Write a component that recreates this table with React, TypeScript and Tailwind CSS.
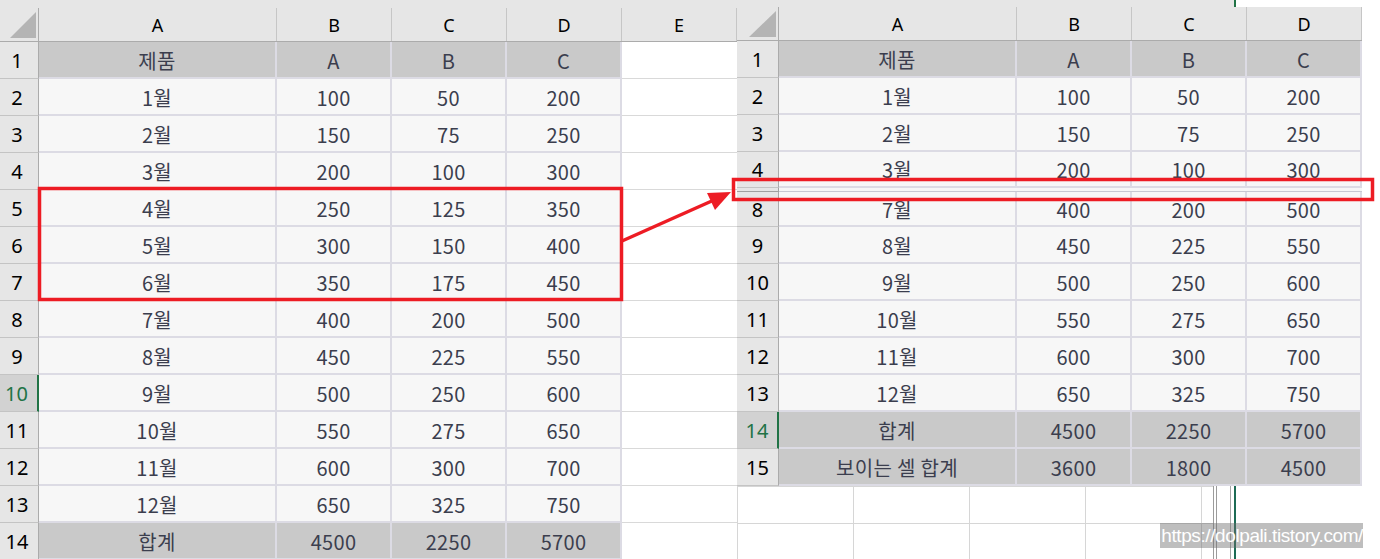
import React from 'react';

type RowData = {
  n: number;
  cells: string[];
  head?: boolean;
  sel?: boolean;
};

const months: RowData[] = Array.from({ length: 12 }, (_, i) => ({
  n: i + 2,
  cells: [`${i + 1}월`, String(100 + 50 * i), String(50 + 25 * i), String(200 + 50 * i)],
}));

const leftRows: RowData[] = [
  { n: 1, cells: ['제품', 'A', 'B', 'C'], head: true },
  ...months.map((r) => (r.n === 10 ? { ...r, sel: true } : r)),
  { n: 14, cells: ['합계', '4500', '2250', '5700'], head: true },
];

// right sheet hides rows 5-7
const rightTop = [leftRows[0], leftRows[1], leftRows[2]];
const rightRow4 = leftRows[3];
const rightBottom: RowData[] = [
  ...months.slice(6),
  { n: 14, cells: ['합계', '4500', '2250', '5700'], head: true, sel: true },
  { n: 15, cells: ['보이는 셀 합계', '3600', '1800', '4500'], head: true },
];

const cellFont = { fontFamily: '"Noto Sans CJK KR", "Noto Sans", sans-serif' };
const headFont = { fontFamily: '"Noto Sans", "Open Sans", sans-serif' };

function Corner({ right = false }: { right?: boolean }) {
  return right ? (
    <div className="w-[42px] h-full shrink-0 border-r border-[#ababab]">
      <svg width="42" height="33" viewBox="0 0 42 33">
        <polygon points="12,30 39,30 39,4" fill="#b4b4b4" />
      </svg>
    </div>
  ) : (
    <div className="w-[39px] h-full shrink-0 border-r border-[#ababab]">
      <svg width="39" height="33" viewBox="0 0 39 33">
        <polygon points="10,30 36,30 36,4" fill="#b4b4b4" />
      </svg>
    </div>
  );
}

function ColHead({ label, wide = false }: { label: string; wide?: boolean }) {
  return (
    <div
      className={`${wide ? 'w-[238px]' : 'w-[115px]'} shrink-0 h-full pt-[2px] border-r border-[#c6c6c6] flex items-center justify-center text-[18px] text-black`}
      style={headFont}
    >
      {label}
    </div>
  );
}

function RowHead({ n, sel, right = false }: { n: number; sel?: boolean; right?: boolean }) {
  return (
    <div
      className={`${right ? 'w-[42px]' : 'w-[39px] pr-[4px]'} shrink-0 h-full pt-[1px] flex items-center justify-center text-[20px] border-b border-[#c4c4c4] ${
        sel
          ? 'bg-[#d2d2d2] text-[#217346] border-r-2 border-r-[#217346]'
          : 'bg-[#e6e6e6] text-black border-r border-r-[#ababab]'
      }`}
      style={headFont}
    >
      {n}
    </div>
  );
}

function DataCells({ row }: { row: RowData }) {
  return (
    <>
      {row.cells.map((c, i) => (
        <div
          key={i}
          className={`${i === 0 ? 'w-[238px]' : 'w-[115px]'} shrink-0 h-full pt-[2px] flex items-center justify-center border-r-2 border-b-2 border-[#dcdbe4] text-[20px] tracking-[0.3px] text-[#3b3e4e] ${
            row.head ? 'bg-[#c9c9c9]' : 'bg-[#f7f7f7]'
          }`}
          style={cellFont}
        >
          {c}
        </div>
      ))}
    </>
  );
}

function LeftSheet() {
  return (
    <div className="w-[737px] shrink-0 flex flex-col">
      <div className="flex h-[42px] bg-[#e6e6e6] border-b border-[#ababab]">
        <div className="flex w-full h-[33px] mt-[8px]">
          <Corner />
          <ColHead label="A" wide />
          <ColHead label="B" />
          <ColHead label="C" />
          <ColHead label="D" />
          <ColHead label="E" />
        </div>
      </div>
      {leftRows.map((row) => (
        <div key={row.n} className="flex h-[37px] shrink-0">
          <RowHead n={row.n} sel={row.sel} />
          <DataCells row={row} />
          <div className="w-[115px] shrink-0 h-full bg-white border-b border-[#d9d9d9]" />
        </div>
      ))}
    </div>
  );
}

function RightSheet() {
  return (
    <div className="w-[625px] shrink-0 flex flex-col bg-white">
      <div className="flex h-[34px] bg-[#e6e6e6] border-b border-[#ababab]">
        <Corner right />
        <ColHead label="A" wide />
        <ColHead label="B" />
        <ColHead label="C" />
        <ColHead label="D" />
      </div>
      {rightTop.map((row) => (
        <div key={row.n} className="flex h-[37px] shrink-0">
          <RowHead n={row.n} right />
          <DataCells row={row} />
        </div>
      ))}
      <div className="flex h-[36px] shrink-0">
        <RowHead n={rightRow4.n} right />
        <DataCells row={rightRow4} />
      </div>
      {/* hidden rows 5-7 */}
      <div className="flex h-[4px] shrink-0">
        <div className="w-[42px] h-full bg-[#e6e6e6] border-r border-b border-[#a0a0a0]" />
        <div className="w-[583px] h-full bg-[#f7f7f7] border-b border-[#c8c8d2]" />
      </div>
      <div className="flex h-[35px] shrink-0">
        <RowHead n={8} right />
        <DataCells row={rightBottom[0]} />
      </div>
      {rightBottom.slice(1).map((row) => (
        <div key={row.n} className="flex h-[37px] shrink-0">
          <RowHead n={row.n} sel={row.sel} right />
          <DataCells row={row} />
        </div>
      ))}
    </div>
  );
}

function BottomGrid() {
  return (
    <div className="flex h-[73px] bg-white">
      {[0, 1, 2, 3].map((i) => (
        <div key={i} className="w-[116px] shrink-0 h-full border-l border-[#d6d6d6] border-t flex flex-col">
          <div className="h-[37px] border-b border-[#d6d6d6]" />
        </div>
      ))}
      <div className="w-[12px] shrink-0 h-full border-l border-t border-[#d6d6d6] flex flex-col">
        <div className="h-[37px] border-b border-[#d6d6d6]" />
      </div>
      <div className="w-[1px] shrink-0 bg-[#9c9c9c]" />
      <div className="w-[2px] shrink-0" />
      <div className="w-[1px] shrink-0 bg-[#9c9c9c]" />
      <div className="w-[13px] shrink-0" />
      <div className="w-[1px] shrink-0 bg-[#a8a8a8]" />
      <div className="w-[3px] shrink-0" />
      <div className="w-[2px] shrink-0 bg-[#1d6b55]" />
      <div className="flex-1" />
    </div>
  );
}

export default function App() {
  return (
    <div className="relative w-[1380px] h-[559px] overflow-hidden bg-white flex">
      <LeftSheet />
      <div className="w-[643px] shrink-0 flex flex-col">
        <div className="flex h-[7px]">
          <div className="w-[497px] bg-[#e6e6e6]" />
          <div className="w-[2px] bg-[#217346]" />
          <div className="flex-1 bg-white" />
        </div>
        <div className="flex h-[479px]">
          <RightSheet />
          <div className="flex-1 bg-white" />
        </div>
        <BottomGrid />
      </div>

      <svg className="absolute inset-0 pointer-events-none" width="1380" height="559" viewBox="0 0 1380 559">
        <rect x="39.5" y="188.5" width="582" height="111" fill="none" stroke="#ed1c24" strokeWidth="3.5" />
        <rect x="733.5" y="179.5" width="639" height="20" fill="none" stroke="#ed1c24" strokeWidth="3.5" />
        <line x1="622" y1="241" x2="714" y2="200" stroke="#ed1c24" strokeWidth="3.5" />
        <polygon points="731,192 715,210 707,193" fill="#ed1c24" />
      </svg>

      <div
        className="absolute left-[1160px] top-[523px] w-[203px] h-[25px] bg-[rgba(110,110,110,0.45)] text-white text-[19px] leading-[25px] tracking-[-0.4px] text-right whitespace-nowrap overflow-hidden"
        style={{ fontFamily: '"Liberation Sans", Arial, sans-serif' }}
      >
        https://dolpali.tistory.com/
      </div>
    </div>
  );
}
